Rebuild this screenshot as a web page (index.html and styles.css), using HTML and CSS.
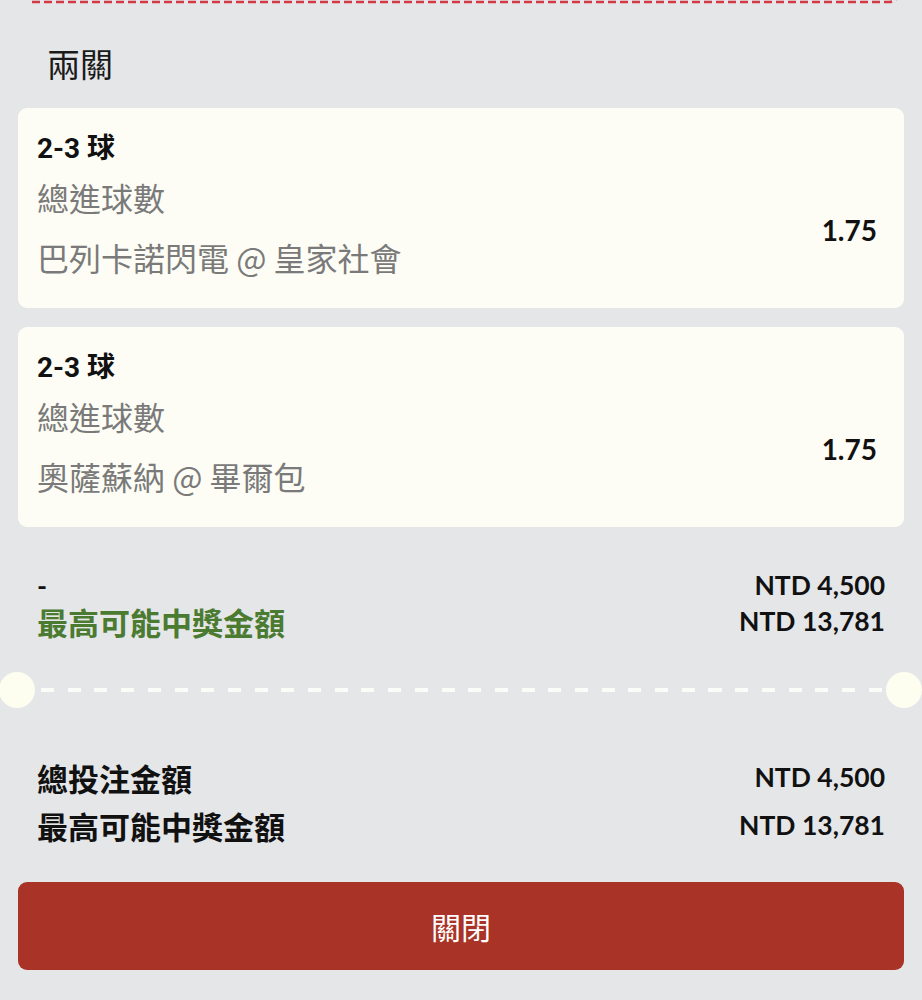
FILE: index.html
```html
<!DOCTYPE html>
<html lang="zh-Hant">
<head>
<meta charset="utf-8">
<title>兩關</title>
<link rel="stylesheet" href="styles.css">
</head>
<body>
<div class="page">
  <svg class="topline" width="922" height="4" viewBox="0 0 922 4" aria-hidden="true">
    <path d="M32 2 H889 Q895 2 898 -4" fill="none" stroke="#d23a44" stroke-width="2.5" stroke-dasharray="8 4"/>
  </svg>

  <h2 class="leg-title">兩關</h2>

  <div class="card">
    <div class="pick">2-3 球</div>
    <div class="card-body">
      <div class="info">
        <div class="market">總進球數</div>
        <div class="match">巴列卡諾閃電 @ 皇家社會</div>
      </div>
      <div class="odds">1.75</div>
    </div>
  </div>

  <div class="card">
    <div class="pick">2-3 球</div>
    <div class="card-body">
      <div class="info">
        <div class="market">總進球數</div>
        <div class="match">奧薩蘇納 @ 畢爾包</div>
      </div>
      <div class="odds">1.75</div>
    </div>
  </div>

  <div class="summary">
    <div class="row">
      <span class="dash-label">-</span>
      <span class="amount">NTD 4,500</span>
    </div>
    <div class="row">
      <span class="label green">最高可能中獎金額</span>
      <span class="amount">NTD 13,781</span>
    </div>
  </div>

  <div class="separator">
    <span class="notch"></span>
    <span class="dashes"></span>
    <span class="notch"></span>
  </div>

  <div class="totals">
    <div class="row tall">
      <span class="label">總投注金額</span>
      <span class="amount">NTD 4,500</span>
    </div>
    <div class="row tall">
      <span class="label">最高可能中獎金額</span>
      <span class="amount">NTD 13,781</span>
    </div>
  </div>

  <button class="close-btn" type="button">關閉</button>
</div>
</body>
</html>
```

FILE: styles.css
```css
* { box-sizing: border-box; }

html, body {
  margin: 0;
  padding: 0;
  background: #e5e6e8;
}

body {
  font-family: "Noto Sans CJK TC", "Noto Sans", sans-serif;
  color: #111;
}

.page {
  padding: 0 18px;
  width: 922px;
  min-height: 1000px;
}

.topline {
  display: block;
  margin-left: -18px;
}

.leg-title {
  margin: 39px 0 25px 29px;
  font-size: 33px;
  line-height: 40px;
  font-weight: 400;
  color: #1a1a1a;
}

.card {
  background: #fdfdf5;
  border-radius: 9px;
  height: 200px;
  padding: 21px 27px 0 19px;
  margin-bottom: 19px;
}

.pick {
  font-family: Roboto, "Noto Sans CJK TC", sans-serif;
  font-weight: 700;
  font-size: 28px;
  line-height: 40px;
  color: #111;
}

.card-body {
  display: flex;
  align-items: center;
  justify-content: space-between;
  margin-top: 6px;
}

.market,
.match {
  font-size: 32px;
  line-height: 44px;
  color: #7a7a7a;
  font-weight: 400;
}

.match {
  margin-top: 16px;
}

.odds {
  font-family: Lato, "Liberation Sans", sans-serif;
  font-weight: 700;
  font-size: 28px;
  line-height: 36px;
  color: #111;
  padding-top: 6px;
}

.summary {
  margin-top: 40px;
  padding: 0 19px;
}

.row {
  display: flex;
  justify-content: space-between;
  align-items: center;
  height: 36px;
  line-height: 36px;
}

.row.tall {
  height: 48px;
  line-height: 48px;
}

.dash-label {
  font-family: Lato, sans-serif;
  font-weight: 700;
  font-size: 27px;
  line-height: 34px;
  padding-top: 2px;
}

.label {
  font-size: 31px;
  font-weight: 700;
  color: #111;
  line-height: 34px;
  padding-top: 2px;
}

.label.green {
  color: #4b7b31;
}

.amount {
  font-family: Lato, "Liberation Sans", sans-serif;
  font-weight: 700;
  font-size: 26.5px;
  line-height: 34px;
  color: #111;
}

.separator {
  display: flex;
  align-items: center;
  margin: 33px -18px 0 -19px;
  height: 36px;
}

.notch {
  width: 36px;
  height: 36px;
  border-radius: 50%;
  background: #fdfdf0;
  flex: none;
}

.dashes {
  flex: 1;
  height: 4px;
  margin: 0 3px 0 6px;
  background: repeating-linear-gradient(to right, #fbfbf8 0 13px, transparent 13px 26.7px);
}

.totals {
  margin-top: 45px;
  padding: 0 19px;
}

.close-btn {
  display: block;
  width: 100%;
  height: 88px;
  margin-top: 33px;
  border: none;
  border-radius: 9px;
  background: #a83326;
  color: #fff;
  font-family: "Noto Sans CJK TC", sans-serif;
  font-size: 30px;
  font-weight: 400;
}
```
